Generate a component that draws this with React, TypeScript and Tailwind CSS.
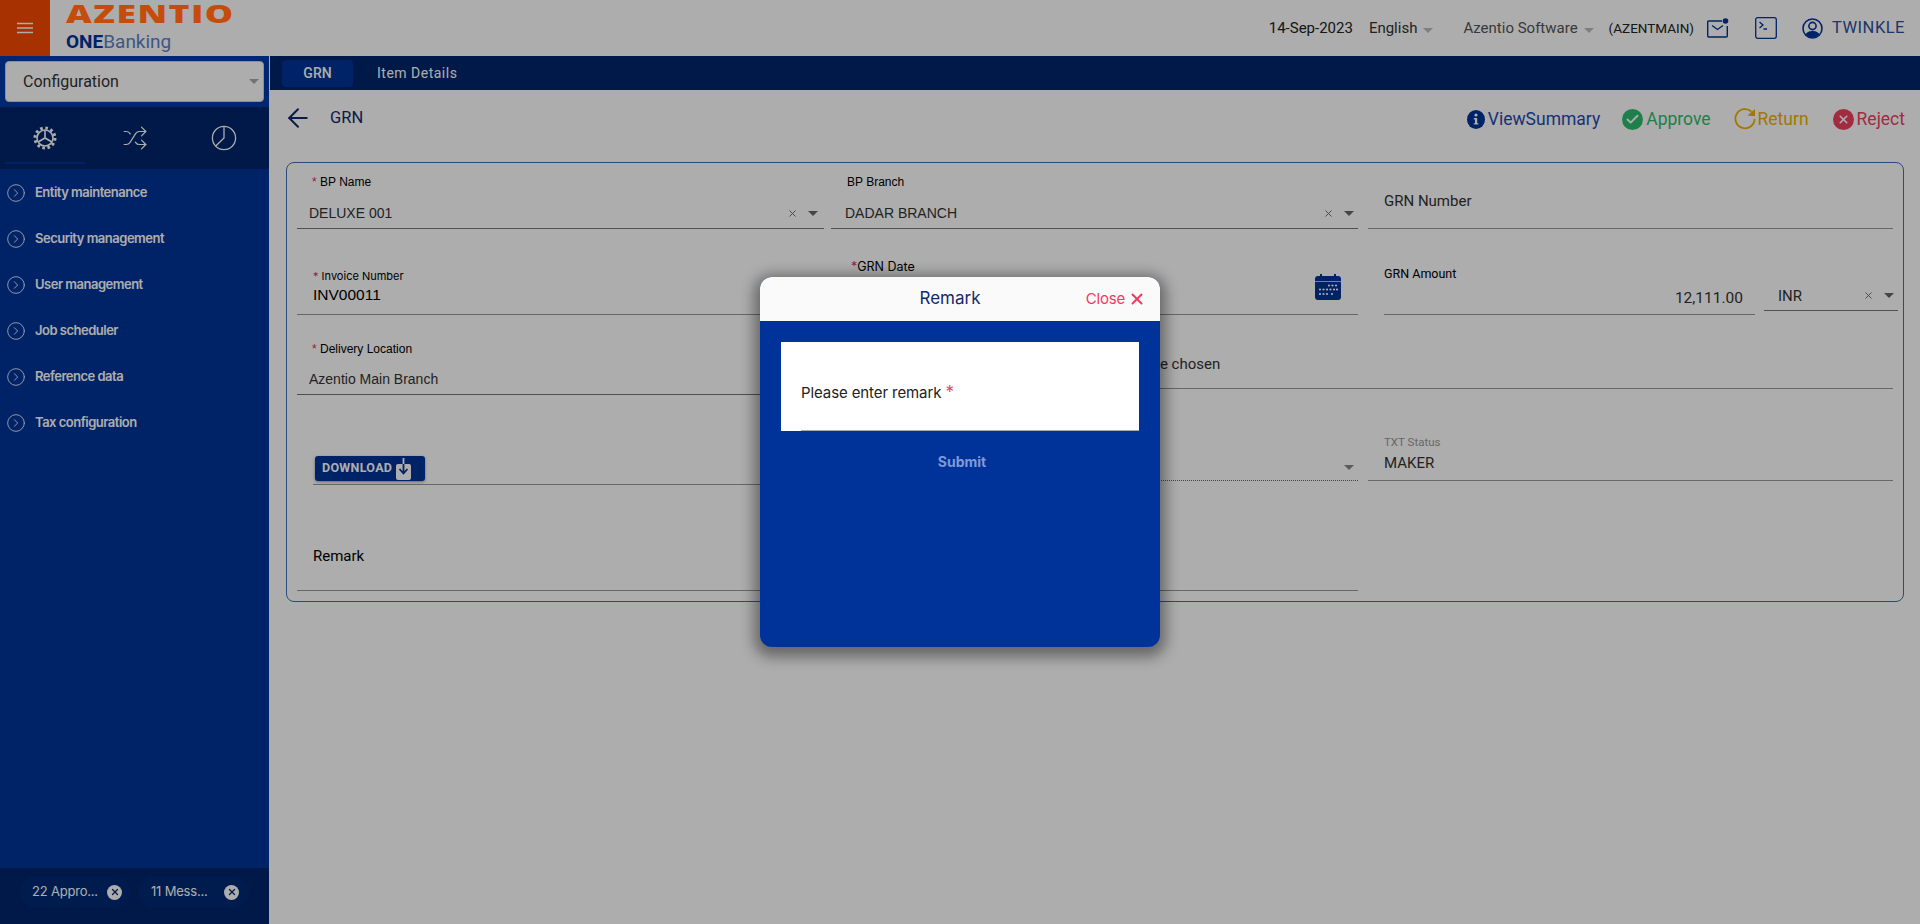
import React from 'react';
import { CircleChevronRight, Shuffle, ArrowLeft, X, Check } from 'lucide-react';

const Caret = ({ className = 'border-t-[#666]' }: { className?: string }) => (
    <span className={`inline-block w-0 h-0 border-x-[5px] border-x-transparent border-t-[5px] ${className}`}></span>
);

const GearIcon = () => (
    <svg width="24" height="24" viewBox="0 0 24 24" fill="none" stroke="white">
        <circle cx="12" cy="12" r="8" strokeWidth="1.6" />
        <circle cx="12" cy="12" r="10" strokeWidth="3" strokeDasharray="2.6 2.64" />
        <path d="M12 12L12 4.5M12 12L5.5 15.8M12 12L18.5 15.8" strokeWidth="1.6" />
    </svg>
);

const PieIcon = () => (
    <svg width="26" height="26" viewBox="0 0 26 26" fill="none" stroke="white" strokeWidth="1.3">
        <circle cx="13" cy="13" r="11.6" />
        <path d="M13 1.5V13L4.8 21" />
    </svg>
);

const MailIcon = () => (
    <svg width="22" height="20" viewBox="0 0 22 20" fill="none" stroke="#003399" strokeWidth="1.4">
        <path d="M15 3H1.7A1 1 0 0 0 .7 4V18A1 1 0 0 0 1.7 19H19.3A1 1 0 0 0 20.3 18V8" />
        <path d="M5 7.5L10.5 11.5L16 7.5" />
        <circle cx="18.5" cy="3" r="2.8" fill="#003399" stroke="none" />
    </svg>
);

const TerminalIcon = () => (
    <svg width="22" height="22" viewBox="0 0 22 22" fill="none" stroke="#003399" strokeWidth="1.3">
        <rect x=".7" y=".7" width="20.6" height="20.6" rx="2" />
        <path d="M4.5 5L8 8L4.5 11M8.5 12H12" />
    </svg>
);

const UserIcon = () => (
    <svg width="21" height="21" viewBox="0 0 21 21" fill="none">
        <circle cx="10.5" cy="10.5" r="9.5" stroke="#003399" strokeWidth="1.6" />
        <circle cx="10.5" cy="8" r="3.6" stroke="#003399" strokeWidth="1.6" />
        <path d="M3.6 16.6C5 13.6 7.8 13 10.5 13S16 13.6 17.4 16.6A9.5 9.5 0 0 1 3.6 16.6Z" fill="#003399" />
    </svg>
);

const CalendarIcon = () => (
    <svg width="26" height="26" viewBox="0 0 26 26" fill="#003399">
        <rect x="0" y="2" width="26" height="24" rx="3" />
        <rect x="5" y="0" width="2" height="4" />
        <rect x="19" y="0" width="2" height="4" />
        <rect x="0" y="7" width="26" height="1" fill="#adc0e0" />
        <g fill="white">
            <circle cx="14" cy="11.5" r="1.1" /><circle cx="17.5" cy="11.5" r="1.1" /><circle cx="21" cy="11.5" r="1.1" />
            <circle cx="5" cy="15.5" r="1.1" /><circle cx="8.5" cy="15.5" r="1.1" /><circle cx="12" cy="15.5" r="1.1" /><circle cx="15.5" cy="15.5" r="1.1" /><circle cx="19" cy="15.5" r="1.1" /><circle cx="22" cy="15.5" r="1.1" />
            <circle cx="5" cy="20" r="1.1" /><circle cx="8.5" cy="20" r="1.1" /><circle cx="12" cy="20" r="1.1" /><circle cx="17" cy="20" r="1.1" />
        </g>
    </svg>
);

const DownloadIcon = () => (
    <svg width="15" height="22" viewBox="0 0 15 22">
        <rect x="0" y="6" width="15" height="16" rx="2" fill="white" />
        <path d="M7.5 0V6" fill="none" stroke="white" strokeWidth="1.8" />
        <path d="M7.5 6V15M3.5 11L7.5 15.5L11.5 11" fill="none" stroke="#003399" strokeWidth="1.8" />
    </svg>
);

const InfoIcon = () => (
    <svg width="18" height="19" viewBox="0 0 18 19">
        <ellipse cx="9" cy="9.5" rx="9" ry="9.5" fill="#003399" />
        <circle cx="9" cy="5" r="1.6" fill="white" />
        <path d="M6.8 8H10.2V13.2H11.4V14.6H6.8V13.2H8V9.4H6.8Z" fill="white" />
    </svg>
);

const ReturnIcon = () => (
    <svg width="22" height="22" viewBox="0 0 22 22" fill="none">
        <path d="M17.5 3.6A9.6 9.6 0 1 0 20.6 11" stroke="#f0b000" strokeWidth="1.8" />
        <path d="M13.4 7.6L21 8.2V1Z" fill="#f0b000" />
    </svg>
);

const MENU = ['Entity maintenance', 'Security management', 'User management', 'Job scheduler', 'Reference data', 'Tax configuration'];

const Sidebar = () => (
    <aside className="w-[269px] shrink-0 flex flex-col bg-[#003399] font-['Inter',sans-serif]">
        <div className="h-[51px] shrink-0 px-[5px] pt-[5px] bg-[#003aa8]">
            <div className="h-[41px] bg-white border border-[#c8d4e8] rounded-[4px] flex items-center justify-between pl-[17px] pr-[4px] font-['Roboto',sans-serif] text-[16px] text-[#333]">
                Configuration
                <Caret className="border-t-[#aaa]" />
            </div>
        </div>
        <div className="h-[62px] shrink-0 bg-[#00266a] flex items-center px-[5px]">
            <div className="w-[80px] h-[57px] self-start pt-[19px] flex justify-center border-b-2 border-[#003399]"><GearIcon /></div>
            <div className="w-[100px] flex justify-center"><Shuffle size={26} strokeWidth={1.1} className="text-white" /></div>
            <div className="w-[78px] flex justify-center"><PieIcon /></div>
        </div>
        <nav className="flex-1 pt-[1px] pl-[6px]">
            {MENU.map((m) => (
                <div key={m} className="h-[46px] flex items-center gap-[9px] text-[13px] font-semibold tracking-[-.5px] text-white">
                    <CircleChevronRight size={20} strokeWidth={1} className="-mt-[1px]" />
                    {m}
                </div>
            ))}
        </nav>
        <div className="h-[56px] shrink-0 bg-[#00266a] flex items-start pt-[8px] pl-[20px] gap-[9px] text-[13px] tracking-[-.2px] text-white">
            <div className="w-[110px] h-[32px] rounded-full bg-[#002a75] flex items-center justify-between pl-[12px] pr-[8px]">
                22 Appro...
                <span className="w-[15px] h-[15px] rounded-full bg-white flex items-center justify-center"><X size={10} strokeWidth={3} className="text-[#00266a]" /></span>
            </div>
            <div className="w-[110px] h-[32px] rounded-full bg-[#002a75] flex items-center justify-between pl-[12px] pr-[10px]">
                11 Mess...
                <span className="w-[15px] h-[15px] rounded-full bg-white flex items-center justify-center"><X size={10} strokeWidth={3} className="text-[#00266a]" /></span>
            </div>
        </div>
    </aside>
);

const Header = () => (
    <header className="h-[56px] shrink-0 flex bg-white font-['Roboto',sans-serif]">
        <div className="w-[50px] bg-[#f74a00] flex items-center justify-center">
            <svg width="16" height="12" viewBox="0 0 16 12" stroke="white" strokeWidth="1.6"><path d="M0 1.5H16M0 6H16M0 10.5H16" /></svg>
        </div>
        <div className="ml-[16px] w-[200px] flex flex-col">
            <div className="h-[29px]">
                {/* the logo's orange reads brighter than the dimming layer allows, so it sits above it */}
                <span className="relative z-10 inline-block origin-left scale-x-[1.48] whitespace-nowrap text-[24px] leading-[27px] font-black tracking-[1px] text-[#c64c0c] font-['Open_Sans',sans-serif]">AZENTIO</span>
            </div>
            <span className="block mt-[1px] text-[19px] leading-[24px] text-[#5a80c8]"><b className="text-[#003399]">ONE</b>Banking</span>
        </div>
        <div className="flex-1"></div>
        <div className="flex items-center pr-[15px]">
            <span className="text-[15px] text-[#222]">14-Sep-2023</span>
            <span className="ml-[16px] text-[#333] text-[15px]">English</span>
            <span className="ml-[6px]"><Caret className="border-t-[#bbb]" /></span>
            <span className="ml-[30px] text-[#555] text-[15px]">Azentio Software</span>
            <span className="ml-[6px]"><Caret className="border-t-[#bbb]" /></span>
            <span className="ml-[15px] text-[#222] text-[13.5px]">(AZENTMAIN)</span>
            <span className="ml-[13px]"><MailIcon /></span>
            <span className="ml-[26px]"><TerminalIcon /></span>
            <span className="ml-[25px]"><UserIcon /></span>
            <span className="ml-[9px] text-[16.5px] tracking-[.5px] text-[#2b4f9e]">TWINKLE</span>
        </div>
    </header>
);

const Req = () => <span className="text-[#e02b50]">*</span>;

const Form = () => (
    <div className="mx-[16px] h-[440px] border border-[#3f6fb5] rounded-[8px] pl-[10px] font-['Liberation_Sans',sans-serif]">
        <div className="grid grid-cols-[534px_537px_525px] h-[66px]">
            <div className="mr-[7px] border-b border-[#777] pl-[15px] pt-[11px]">
                <div className="text-[12px] leading-[16px] text-black"><Req /> BP Name</div>
                <div className="mt-[13px] -ml-[3px] flex items-center text-[14px] leading-[20px] text-[#333]">
                    DELUXE 001
                    <span className="ml-auto mr-[6px] flex items-center gap-[10px]"><X size={11} className="text-[#666]" /><Caret /></span>
                </div>
            </div>
            <div className="mr-[10px] border-b border-[#777] pl-[16px] pt-[11px]">
                <div className="text-[12px] leading-[16px] text-black">BP Branch</div>
                <div className="mt-[13px] -ml-[2px] flex items-center text-[14px] leading-[20px] text-[#333]">
                    DADAR BRANCH
                    <span className="ml-auto mr-[4px] flex items-center gap-[10px]"><X size={11} className="text-[#666]" /><Caret /></span>
                </div>
            </div>
            <div className="border-b border-[#999] pl-[16px] pt-[28px] font-['Roboto',sans-serif] text-[15px] leading-[20px] text-[#333]">GRN Number</div>
        </div>

        <div className="grid grid-cols-[534px_537px_525px] h-[86px]">
            <div className="mr-[7px] border-b border-[#999] pl-[16px] pt-[40px] font-['Inter',sans-serif]">
                <div className="text-[11px] leading-[14px] text-black"><Req /> Invoice Number</div>
                <div className="mt-[2px] font-['Liberation_Sans',sans-serif] text-[15.5px] leading-[20px] text-black">INV00011</div>
            </div>
            <div className="mr-[10px] border-b border-[#999] pl-[20px] pt-[30px] flex justify-between">
                <div className="font-['Inter',sans-serif] text-[12.5px] leading-[16px] text-black"><Req />GRN Date</div>
                <div className="mt-[15px] mr-[17px]"><CalendarIcon /></div>
            </div>
            <div className="flex">
                <div className="w-[371px] shrink-0 ml-[16px] h-[86px] border-b border-[#999] pt-[37px] font-['Roboto',sans-serif]">
                    <div className="text-[12.5px] leading-[16px] text-black">GRN Amount</div>
                    <div className="mt-[6px] pr-[12px] text-right text-[15.5px] leading-[20px] text-[#333]">12,111.00</div>
                </div>
                <div className="w-[134px] shrink-0 ml-[9px] h-[82px] border-b border-[#777] pt-[57px] pl-[14px] flex items-start font-['Roboto',sans-serif] text-[15px] leading-[20px] text-[#333]">
                    INR
                    <span className="ml-auto mr-[4px] mt-[4px] flex items-center gap-[10px]"><X size={11} className="text-[#666]" /><Caret /></span>
                </div>
            </div>
        </div>

        <div className="grid grid-cols-[534px_1062px] h-[80px]">
            <div className="mr-[7px] border-b border-[#777] pl-[15px] pt-[26px]">
                <div className="text-[12px] leading-[16px] text-black"><Req /> Delivery Location</div>
                <div className="mt-[12px] -ml-[3px] text-[14px] leading-[20px] text-[#333]">Azentio Main Branch</div>
            </div>
            <div className="h-[74px] border-b border-[#999] pl-[294px] pt-[39px] font-['Roboto',sans-serif] text-[15px] leading-[20px] text-[#333]">No file chosen</div>
        </div>

        <div className="grid grid-cols-[534px_537px_525px] h-[90px]">
            <div className="mr-[7px] ml-[16px] border-b border-[#999] pt-[61px]">
                <button className="ml-[2px] w-[110px] h-[25px] rounded-[3px] bg-[#003399] shadow-[0_1px_3px_rgba(0,0,0,.4)] flex items-center pl-[7px] gap-[4px] text-[12.5px] font-bold font-['Roboto',sans-serif] tracking-[.3px] text-white">
                    DOWNLOAD <DownloadIcon />
                </button>
            </div>
            <div className="mr-[10px] h-[86px] border-b border-dotted border-[#666] flex justify-end items-start pt-[70px] pr-[4px]"><Caret className="border-t-[#888]" /></div>
            <div className="h-[86px] border-b border-[#999] pl-[16px] pt-[40px] font-['Roboto',sans-serif]">
                <div className="text-[11.5px] leading-[14px] text-[#999]">TXT Status</div>
                <div className="mt-[4px] text-[15px] leading-[20px] text-[#333]">MAKER</div>
            </div>
        </div>

        <div className="w-[1061px] h-[106px] border-b border-[#999] pl-[16px] pt-[61px] font-['Roboto',sans-serif] text-[15px] leading-[20px] text-black">Remark</div>
    </div>
);

const RemarkDialog = () => (
    <div className="absolute left-[760px] top-[277px] w-[400px] h-[370px] rounded-[12px] overflow-hidden bg-[#003399] shadow-[0_4px_14px_6px_rgba(0,0,0,.4)] font-['Inter',sans-serif]">
        <div className="h-[44px] bg-[#fafafa] flex items-center relative">
            <span className="flex-1 pr-[20px] text-center text-[17px] text-[#13296b]">Remark</span>
            <span className="absolute right-[14px] flex items-center gap-[3px] text-[15px] tracking-[-.2px] text-[#f4395f]">Close <X size={18} strokeWidth={2.6} /></span>
        </div>
        <div className="mt-[21px] mx-[21px] h-[89px] bg-white pl-[20px] pt-[40px]">
            <div className="h-[49px] border-b border-[#aaa] text-[15px] leading-[20px] tracking-[-.1px] text-[#222]">
                Please enter remark <span className="text-[17px] text-[#f4395f]">*</span>
            </div>
        </div>
        <div className="mt-[21px] pl-[4px] text-center text-[14px] leading-[20px] font-bold text-[#7f9ad8]">Submit</div>
    </div>
);

export default function App() {
    return (
        <div className="relative w-[1920px] h-[924px] overflow-hidden bg-white">
            <div className="h-full flex flex-col">
                <Header />
                <div className="flex-1 flex min-h-0">
                    <Sidebar />
                    <main className="flex-1 ml-[1px]">
                        <div className="h-[34px] bg-[#00266a] flex items-center pl-[12px] font-['Roboto',sans-serif] text-[14px] text-white">
                            <div className="w-[71px] h-[27px] rounded-[4px] bg-[#003399] flex items-center justify-center font-medium">GRN</div>
                            <div className="ml-[24px] tracking-[.5px]">Item Details</div>
                        </div>
                        <div className="h-[72px] flex items-center pl-[13px] pr-[15px] pb-[14px] font-['Roboto',sans-serif] text-[17.5px]">
                            <ArrowLeft size={30} strokeWidth={1.6} className="text-[#13296b] -mt-[3px]" />
                            <span className="ml-[17px] -mt-[1px] text-[16.5px] text-[#13296b]">GRN</span>
                            <span className="ml-auto flex items-center gap-[3px] text-[#1e4bb0]"><InfoIcon />ViewSummary</span>
                            <span className="ml-[22px] flex items-center gap-[3px] text-[#2bbd6e]"><span className="w-[21px] h-[21px] rounded-full bg-[#2bbd6e] flex items-center justify-center"><Check size={15} strokeWidth={3} className="text-white" /></span>Approve</span>
                            <span className="ml-[23px] flex items-center gap-[2px] text-[#f0b000]"><ReturnIcon />Return</span>
                            <span className="ml-[24px] flex items-center gap-[3px] text-[#f0405f]"><span className="w-[21px] h-[21px] rounded-full bg-[#f0405f] flex items-center justify-center"><X size={13} strokeWidth={3} className="text-white" /></span>Reject</span>
                        </div>
                        <Form />
                    </main>
                </div>
            </div>
            <div className="absolute inset-0 bg-black/[.32]"></div>
            <RemarkDialog />
        </div>
    );
}
